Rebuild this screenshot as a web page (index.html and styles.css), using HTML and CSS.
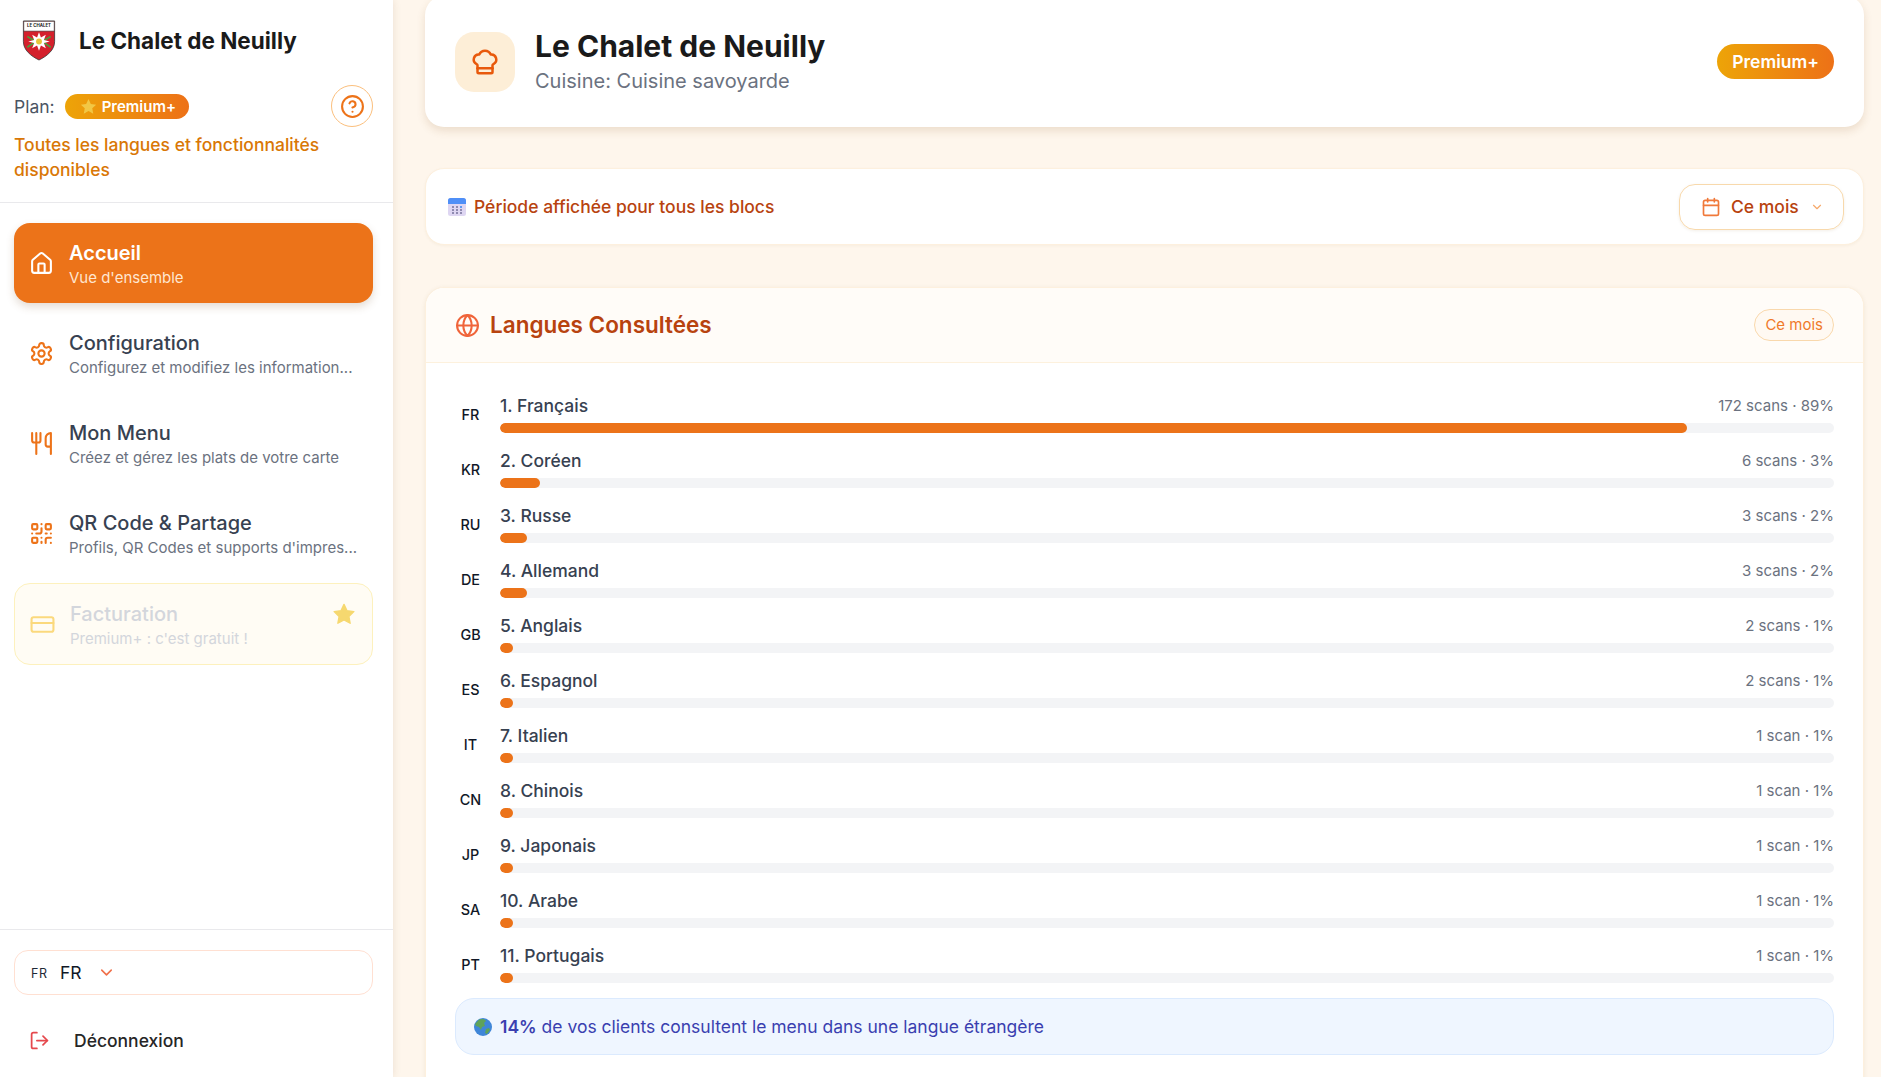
FILE: index.html
```html
<!DOCTYPE html>
<html lang="fr">
<head>
<meta charset="utf-8">
<title>Le Chalet de Neuilly</title>
<link rel="stylesheet" href="styles.css">
</head>
<body>
<div class="app">
  <aside class="sidebar">
    <header class="side-head">
      <div class="brand">
        <svg class="logo" viewBox="0 0 34 42">
          <path d="M1 1h32v21c0 9-8 15-16 19C9 37 1 31 1 22z" fill="#d4202c" stroke="#333" stroke-width=".8"/>
          <path d="M1.400 1.400h31.200v10H1.400z" fill="#fff" stroke="#333" stroke-width=".6"/>
          <text x="17" y="7" text-anchor="middle" class="logo-text">LE CHALET</text>
          <path d="M5 28l7-5M29 17l-7 4M5 17l7 4M29 28l-7-5" stroke="#4f9a3c" stroke-width="1.800"/>
          <path d="M17 12.500l2 5.500 5-3-2 5.500 6 1.500-6 1.500 2 5.500-5-3-2 5.500-2-5.500-5 3 2-5.500-6-1.500 6-1.500-2-5.500 5 3z" fill="#fff"/>
          <circle cx="17" cy="22" r="3" fill="#e8c63a"/>
        </svg>
        <span class="brand-name">Le Chalet de Neuilly</span>
      </div>
      <div class="plan-row">
        <span class="plan-label">Plan:</span>
        <span class="plan-badge">
          <svg class="star-s" viewBox="0 0 24 24"><path d="M12 1.500l3.300 6.900 7.500 1-5.500 5.200 1.400 7.500-6.700-3.600-6.700 3.600 1.400-7.500L1.200 9.400l7.500-1z" fill="#f2c744"/></svg>
          Premium+
        </span>
        <span class="help">
          <svg class="ic24" viewBox="0 0 24 24"><circle cx="12" cy="12" r="10"/><path d="M9.090 9a3 3 0 0 1 5.830 1c0 2-3 3-3 3"/><path d="M12 17h.01"/></svg>
        </span>
      </div>
      <p class="plan-note">Toutes les langues et fonctionnalités disponibles</p>
    </header>

    <nav class="nav">
      <a class="item active">
        <svg class="ic24" viewBox="0 0 24 24"><path d="M15 21v-8a1 1 0 0 0-1-1h-4a1 1 0 0 0-1 1v8"/><path d="M3 10a2 2 0 0 1 .709-1.528l7-5.999a2 2 0 0 1 2.582 0l7 5.999A2 2 0 0 1 21 10v9a2 2 0 0 1-2 2H5a2 2 0 0 1-2-2z"/></svg>
        <span class="item-text"><b>Accueil</b><small>Vue d'ensemble</small></span>
      </a>
      <a class="item">
        <svg class="ic24" viewBox="0 0 24 24"><path d="M12.220 2h-.44a2 2 0 0 0-2 2v.18a2 2 0 0 1-1 1.730l-.43.25a2 2 0 0 1-2 0l-.15-.08a2 2 0 0 0-2.730.73l-.22.38a2 2 0 0 0 .73 2.730l.15.1a2 2 0 0 1 1 1.720v.51a2 2 0 0 1-1 1.740l-.15.09a2 2 0 0 0-.73 2.730l.22.38a2 2 0 0 0 2.730.73l.15-.08a2 2 0 0 1 2 0l.43.25a2 2 0 0 1 1 1.730V20a2 2 0 0 0 2 2h.44a2 2 0 0 0 2-2v-.18a2 2 0 0 1 1-1.730l.43-.25a2 2 0 0 1 2 0l.15.08a2 2 0 0 0 2.730-.73l.22-.39a2 2 0 0 0-.73-2.730l-.15-.08a2 2 0 0 1-1-1.740v-.5a2 2 0 0 1 1-1.740l.15-.09a2 2 0 0 0 .73-2.730l-.22-.38a2 2 0 0 0-2.730-.73l-.15.08a2 2 0 0 1-2 0l-.43-.25a2 2 0 0 1-1-1.730V4a2 2 0 0 0-2-2z"/><circle cx="12" cy="12" r="3"/></svg>
        <span class="item-text"><b>Configuration</b><small>Configurez et modifiez les information...</small></span>
      </a>
      <a class="item">
        <svg class="ic24" viewBox="0 0 24 24"><path d="M3 2v7c0 1.100.9 2 2 2h4a2 2 0 0 0 2-2V2"/><path d="M7 2v20"/><path d="M21 15V2a5 5 0 0 0-5 5v6c0 1.100.9 2 2 2h3Zm0 0v7"/></svg>
        <span class="item-text"><b>Mon Menu</b><small>Créez et gérez les plats de votre carte</small></span>
      </a>
      <a class="item">
        <svg class="ic24" viewBox="0 0 24 24"><rect width="5" height="5" x="3" y="3" rx="1"/><rect width="5" height="5" x="16" y="3" rx="1"/><rect width="5" height="5" x="3" y="16" rx="1"/><path d="M21 16h-3a2 2 0 0 0-2 2v3"/><path d="M21 21v.01"/><path d="M12 7v3a2 2 0 0 1-2 2H7"/><path d="M3 12h.01"/><path d="M12 3h.01"/><path d="M12 16v.01"/><path d="M16 12h1"/><path d="M21 12v.01"/><path d="M12 21v-1"/></svg>
        <span class="item-text"><b>QR Code &amp; Partage</b><small>Profils, QR Codes et supports d'impres...</small></span>
      </a>
      <a class="item locked">
        <svg class="ic24" viewBox="0 0 24 24"><rect width="21" height="14" x="1.500" y="5" rx="2"/><path d="M1.500 10.500h21"/></svg>
        <span class="item-text"><b>Facturation</b><small>Premium+ : c'est gratuit !</small></span>
        <svg class="star-l" viewBox="0 0 24 24"><path d="M12 1.500l3.300 6.900 7.500 1-5.500 5.200 1.400 7.500-6.700-3.600-6.700 3.600 1.400-7.500L1.200 9.400l7.500-1z" fill="#f6d86f" stroke="#f6d86f" stroke-width="1.500" stroke-linejoin="round"/></svg>
      </a>
    </nav>

    <footer class="side-foot">
      <div class="lang-select">
        <span class="lang-code">FR</span>
        <span class="lang-name">FR</span>
        <svg class="chev" viewBox="0 0 24 24"><path d="m6 9 6 6 6-6"/></svg>
      </div>
      <a class="logout">
        <svg class="out-ic" viewBox="0 0 24 24"><path d="M9 21H5a2 2 0 0 1-2-2V5a2 2 0 0 1 2-2h4"/><path d="m16 17 5-5-5-5"/><path d="M21 12H9"/></svg>
        <span>Déconnexion</span>
      </a>
    </footer>
  </aside>

  <main class="main">
    <section class="card hero">
      <div class="hero-left">
        <div class="hero-icon">
          <svg viewBox="0 0 24 24"><path d="M17 21a1 1 0 0 0 1-1v-5.350c0-.457.316-.844.727-1.041a4 4 0 0 0-2.134-7.589 5 5 0 0 0-9.186 0 4 4 0 0 0-2.134 7.588c.411.198.727.585.727 1.041V20a1 1 0 0 0 1 1Z"/><path d="M6 17h12"/></svg>
        </div>
        <div>
          <h1>Le Chalet de Neuilly</h1>
          <p class="cuisine">Cuisine: Cuisine savoyarde</p>
        </div>
      </div>
      <span class="hero-badge">Premium+</span>
    </section>

    <section class="card period">
      <div class="period-label">
        <svg class="cal-emoji" viewBox="0 0 18 18">
          <rect x="0" y="0" width="18" height="18" rx="2.500" fill="#ded6f2"/>
          <path d="M0 6V2.500A2.500 2.500 0 0 1 2.500 0h13A2.500 2.500 0 0 1 18 2.500V6z" fill="#4f8ff7"/>
          <g fill="#8f8ab0"><rect x="4" y="8" width="2" height="2"/><rect x="8" y="8" width="2" height="2"/><rect x="12" y="8" width="2" height="2" fill="#5f9af0"/><rect x="4" y="11" width="2" height="2"/><rect x="8" y="11" width="2" height="2"/><rect x="12" y="11" width="2" height="2"/><rect x="4" y="14" width="2" height="2"/><rect x="8" y="14" width="2" height="2"/><rect x="12" y="14" width="2" height="2"/></g>
        </svg>
        <span>Période affichée pour tous les blocs</span>
      </div>
      <div class="period-select">
        <svg class="cal-ic" viewBox="0 0 24 24"><path d="M8 2v4"/><path d="M16 2v4"/><rect width="18" height="18" x="3" y="4" rx="2"/><path d="M3 10h18"/></svg>
        <span>Ce mois</span>
        <svg class="chev-s" viewBox="0 0 24 24"><path d="m6 9 6 6 6-6"/></svg>
      </div>
    </section>

    <section class="card langs">
      <header class="langs-head">
        <div class="langs-title">
          <svg class="globe-ic" viewBox="0 0 24 24"><circle cx="12" cy="12" r="10"/><path d="M12 2a14.500 14.500 0 0 0 0 20 14.500 14.500 0 0 0 0-20"/><path d="M2 12h20"/></svg>
          <h2>Langues Consultées</h2>
        </div>
        <span class="pill">Ce mois</span>
      </header>
      <div class="langs-body">
        <div class="row"><span class="code">FR</span><div class="row-main"><div class="row-top"><span class="name">1. Français</span><span class="stat">172 scans · 89%</span></div><div class="track"><div class="fill" style="width:89%"></div></div></div></div>
        <div class="row"><span class="code">KR</span><div class="row-main"><div class="row-top"><span class="name">2. Coréen</span><span class="stat">6 scans · 3%</span></div><div class="track"><div class="fill" style="width:3%"></div></div></div></div>
        <div class="row"><span class="code">RU</span><div class="row-main"><div class="row-top"><span class="name">3. Russe</span><span class="stat">3 scans · 2%</span></div><div class="track"><div class="fill" style="width:2%"></div></div></div></div>
        <div class="row"><span class="code">DE</span><div class="row-main"><div class="row-top"><span class="name">4. Allemand</span><span class="stat">3 scans · 2%</span></div><div class="track"><div class="fill" style="width:2%"></div></div></div></div>
        <div class="row"><span class="code">GB</span><div class="row-main"><div class="row-top"><span class="name">5. Anglais</span><span class="stat">2 scans · 1%</span></div><div class="track"><div class="fill" style="width:1%"></div></div></div></div>
        <div class="row"><span class="code">ES</span><div class="row-main"><div class="row-top"><span class="name">6. Espagnol</span><span class="stat">2 scans · 1%</span></div><div class="track"><div class="fill" style="width:1%"></div></div></div></div>
        <div class="row"><span class="code">IT</span><div class="row-main"><div class="row-top"><span class="name">7. Italien</span><span class="stat">1 scan · 1%</span></div><div class="track"><div class="fill" style="width:1%"></div></div></div></div>
        <div class="row"><span class="code">CN</span><div class="row-main"><div class="row-top"><span class="name">8. Chinois</span><span class="stat">1 scan · 1%</span></div><div class="track"><div class="fill" style="width:1%"></div></div></div></div>
        <div class="row"><span class="code">JP</span><div class="row-main"><div class="row-top"><span class="name">9. Japonais</span><span class="stat">1 scan · 1%</span></div><div class="track"><div class="fill" style="width:1%"></div></div></div></div>
        <div class="row"><span class="code">SA</span><div class="row-main"><div class="row-top"><span class="name">10. Arabe</span><span class="stat">1 scan · 1%</span></div><div class="track"><div class="fill" style="width:1%"></div></div></div></div>
        <div class="row"><span class="code">PT</span><div class="row-main"><div class="row-top"><span class="name">11. Portugais</span><span class="stat">1 scan · 1%</span></div><div class="track"><div class="fill" style="width:1%"></div></div></div></div>
        <div class="note">
          <svg class="earth" viewBox="0 0 18 18"><circle cx="9" cy="9" r="9" fill="#3f86d8"/><path d="M5 1.500c3-1 6-.6 7 1.500l-2 2 1 3-3 1-1 3-2-3-3-1-1-2z" fill="#5fa35a"/><path d="M12 11l3-1 1 2-3 4-2-1z" fill="#5fa35a"/></svg>
          <span><strong>14%</strong> de vos clients consultent le menu dans une langue étrangère</span>
        </div>
      </div>
    </section>
  </main>
</div>
</body>
</html>
```
FILE: styles.css
```css
* { box-sizing: border-box; }
html, body { margin: 0; height: 100%; overflow: hidden; }
body { font-family: Inter, "Noto Sans", sans-serif; background: #fef6ec; color: #1f2937; }
h1, h2, p { margin: 0; }
svg { display: block; flex: none; }

.app { display: flex; height: 1077px; overflow: hidden; }

/* sidebar */
.sidebar {
  width: 393px; flex: none; background: #fff; display: flex; flex-direction: column;
  box-shadow: 0 0 8px rgba(120, 80, 40, .14); position: relative; z-index: 1;
}
.side-head { height: 203px; padding: 20px 20px 0 14px; border-bottom: 1px solid #e9e9ec; }
.brand { display: flex; align-items: center; gap: 23px; padding-left: 8px; height: 41px; }
.logo { width: 34px; height: 41px; }
.logo-text { font-size: 4.500px; font-weight: 700; fill: #222; }
.brand-name { font-size: 22.500px; font-weight: 700; color: #1a1a1a; white-space: nowrap; }
.plan-row { display: flex; align-items: center; margin-top: 24px; height: 42px; }
.plan-label { font-size: 17.500px; color: #4b5563; margin-right: 10px; }
.plan-badge {
  display: flex; align-items: center; gap: 5px; height: 25px; padding: 0 13px 0 15px; border-radius: 13px;
  background: linear-gradient(90deg, #eda408, #ed7117); color: #fff; font-size: 15px; font-weight: 600; white-space: nowrap;
}
.star-s { width: 17px; height: 17px; }
.help {
  width: 42px; height: 42px; margin-left: auto; border: 1px solid #fbbf7d; border-radius: 50%;
  display: flex; align-items: center; justify-content: center; color: #ed7319;
}
.ic24 { width: 25px; height: 25px; fill: none; stroke: currentColor; stroke-width: 2; stroke-linecap: round; stroke-linejoin: round; }
.plan-note { margin-top: 5px; font-size: 17.500px; font-weight: 500; line-height: 25px; color: #d97706; }

.nav { flex: 1; padding: 20px 20px 20px 14px; display: flex; flex-direction: column; gap: 10px; }
.item {
  height: 80px; padding: 2px 14px 0; border-radius: 16px; display: flex; align-items: center; gap: 15px; color: #ed7319;
  border: 1px solid transparent;
}
.item > .ic24 { margin-top: -2px; }
.item-text { display: flex; flex-direction: column; gap: 3px; min-width: 0; flex: 1; }
.item-text b { font-size: 20px; line-height: 24px; font-weight: 500; color: #374151; }
.item-text small { font-size: 15px; line-height: 20px; color: #6b7280; white-space: nowrap; }
.item.active { background: #ec7319; color: #fff; box-shadow: 0 4px 8px rgba(120, 80, 40, .2); }
.item.active b { color: #fff; font-weight: 600; }
.item.active small { color: #ffe6d0; }
.item.locked { height: 82px; padding: 2px 15px 0; background: #fffcf4; border-color: #fdf1bd; color: #fbd97d; }
.item.locked b, .item.locked small { color: #d3d6dc; }
.star-l { width: 22px; height: 22px; margin: -22px 2px 0 0; }

.side-foot { height: 148px; border-top: 1px solid #e9e9ec; padding: 20px 20px 0 14px; }
.lang-select {
  height: 45px; border: 1px solid #ffe0d2; border-radius: 14px; display: flex; align-items: center; padding: 0 16px;
}
.lang-code { font-size: 12.500px; width: 29px; color: #1f2937; letter-spacing: .5px; padding-top: 2px; }
.lang-name { font-size: 17.500px; color: #111827; width: 37px; }
.chev { width: 19px; height: 19px; fill: none; stroke: #f0704a; stroke-width: 2; stroke-linecap: round; stroke-linejoin: round; }
.logout { display: flex; align-items: center; gap: 24px; margin-top: 33px; padding-left: 15px; font-size: 17.500px; font-weight: 500; color: #262626; height: 25px; }
.out-ic { width: 21px; height: 21px; fill: none; stroke: #e5484d; stroke-width: 2; stroke-linecap: round; stroke-linejoin: round; }

/* main */
.main { flex: 1; min-width: 0; padding: 0 17px 0 32px; display: flex; flex-direction: column; gap: 41px; }
.card { background: #fff; border-radius: 19px; flex: none; }
.hero {
  height: 131px; margin-top: -4px; padding: 0 30px; display: flex; align-items: center; justify-content: space-between;
  box-shadow: 0 4px 8px rgba(140, 95, 40, .16);
}
.hero-left { display: flex; align-items: center; gap: 20px; }
.hero-icon {
  width: 60px; height: 60px; border-radius: 19px; background: #fdeed7; display: flex; align-items: center; justify-content: center;
  color: #e8590c;
}
.hero-icon svg { width: 30px; height: 30px; fill: none; stroke: currentColor; stroke-width: 2; stroke-linecap: round; stroke-linejoin: round; }
h1 { font-size: 30px; line-height: 38px; font-weight: 700; color: #1a1a1a; margin-top: -2px; }
.cuisine { font-size: 20px; line-height: 27px; color: #6b7280; margin-top: 3px; }
.hero-badge {
  display: flex; align-items: center; height: 35px; padding: 0 15px; border-radius: 18px;
  background: linear-gradient(90deg, #eda408, #ed7117); color: #fff; font-size: 17.500px; font-weight: 600;
}

.period {
  height: 77px; margin-bottom: 1px; padding: 0 19px 0 22px; display: flex; align-items: center; justify-content: space-between;
  border: 1px solid #fdf0de; box-shadow: 0 1px 3px rgba(140, 95, 40, .06);
}
.period-label { display: flex; align-items: center; gap: 8px; font-size: 17.500px; font-weight: 500; color: #b8430f; }
.cal-emoji { width: 18px; height: 18px; }
.period-select {
  width: 165px; height: 46px; border: 1px solid #f8d9ac; border-radius: 16px; display: flex; align-items: center; padding: 0 0 0 21px;
  font-size: 17.500px; font-weight: 500; color: #b8430f; box-shadow: 0 1px 3px rgba(140, 95, 40, .1);
}
.cal-ic { width: 20px; height: 20px; margin-right: 10px; fill: none; stroke: #f0793a; stroke-width: 2; stroke-linecap: round; stroke-linejoin: round; }
.chev-s { width: 14px; height: 14px; margin-left: 11px; fill: none; stroke: #f6a96b; stroke-width: 2; stroke-linecap: round; stroke-linejoin: round; }

.langs { flex: 1; margin-bottom: -40px; border: 1px solid #fdf0de; box-shadow: 0 1px 4px rgba(140, 95, 40, .1); overflow: hidden; }
.langs-head {
  height: 75px; padding: 0 29px; background: #fffcf8; border-bottom: 1px solid #fdf1dd;
  display: flex; align-items: center; justify-content: space-between;
}
.langs-title { display: flex; align-items: center; gap: 10px; }
.globe-ic { width: 25px; height: 25px; fill: none; stroke: #f0643a; stroke-width: 2; stroke-linecap: round; stroke-linejoin: round; }
h2 { font-size: 22.500px; font-weight: 600; color: #b8430f; padding-bottom: 1px; }
.pill {
  display: flex; align-items: center; height: 32px; padding: 0 10px; border-radius: 16px; border: 1px solid #f9d8ac;
  background: #fff9f2; color: #f0792a; font-size: 15px; margin-bottom: 1px;
}
.langs-body { padding: 32px 29px 0; }
.row { display: flex; align-items: center; gap: 14px; height: 38px; margin-bottom: 17px; }
.code { width: 31px; flex: none; text-align: center; font-size: 14.400px; font-weight: 500; color: #111827; padding-top: 1px; }
.row-main { flex: 1; min-width: 0; }
.row-top { display: flex; justify-content: space-between; align-items: center; height: 22px; margin-bottom: 6px; }
.name { font-size: 17.500px; font-weight: 500; color: #374151; padding-bottom: 2px; }
.stat { font-size: 15px; color: #6b7280; padding-bottom: 2px; }
.track { height: 10px; border-radius: 5px; background: #f3f4f6; overflow: hidden; }
.fill { height: 100%; border-radius: 5px; background: #ec7319; }
.note {
  margin-top: -2px; height: 57px; border: 1px solid #dbeafe; border-radius: 19px; background: #eff6ff;
  display: flex; align-items: center; gap: 8px; padding: 0 18px; font-size: 17.500px; color: #3a3fb0;
}
.earth { width: 18px; height: 18px; }
.note strong { font-weight: 600; }
```
